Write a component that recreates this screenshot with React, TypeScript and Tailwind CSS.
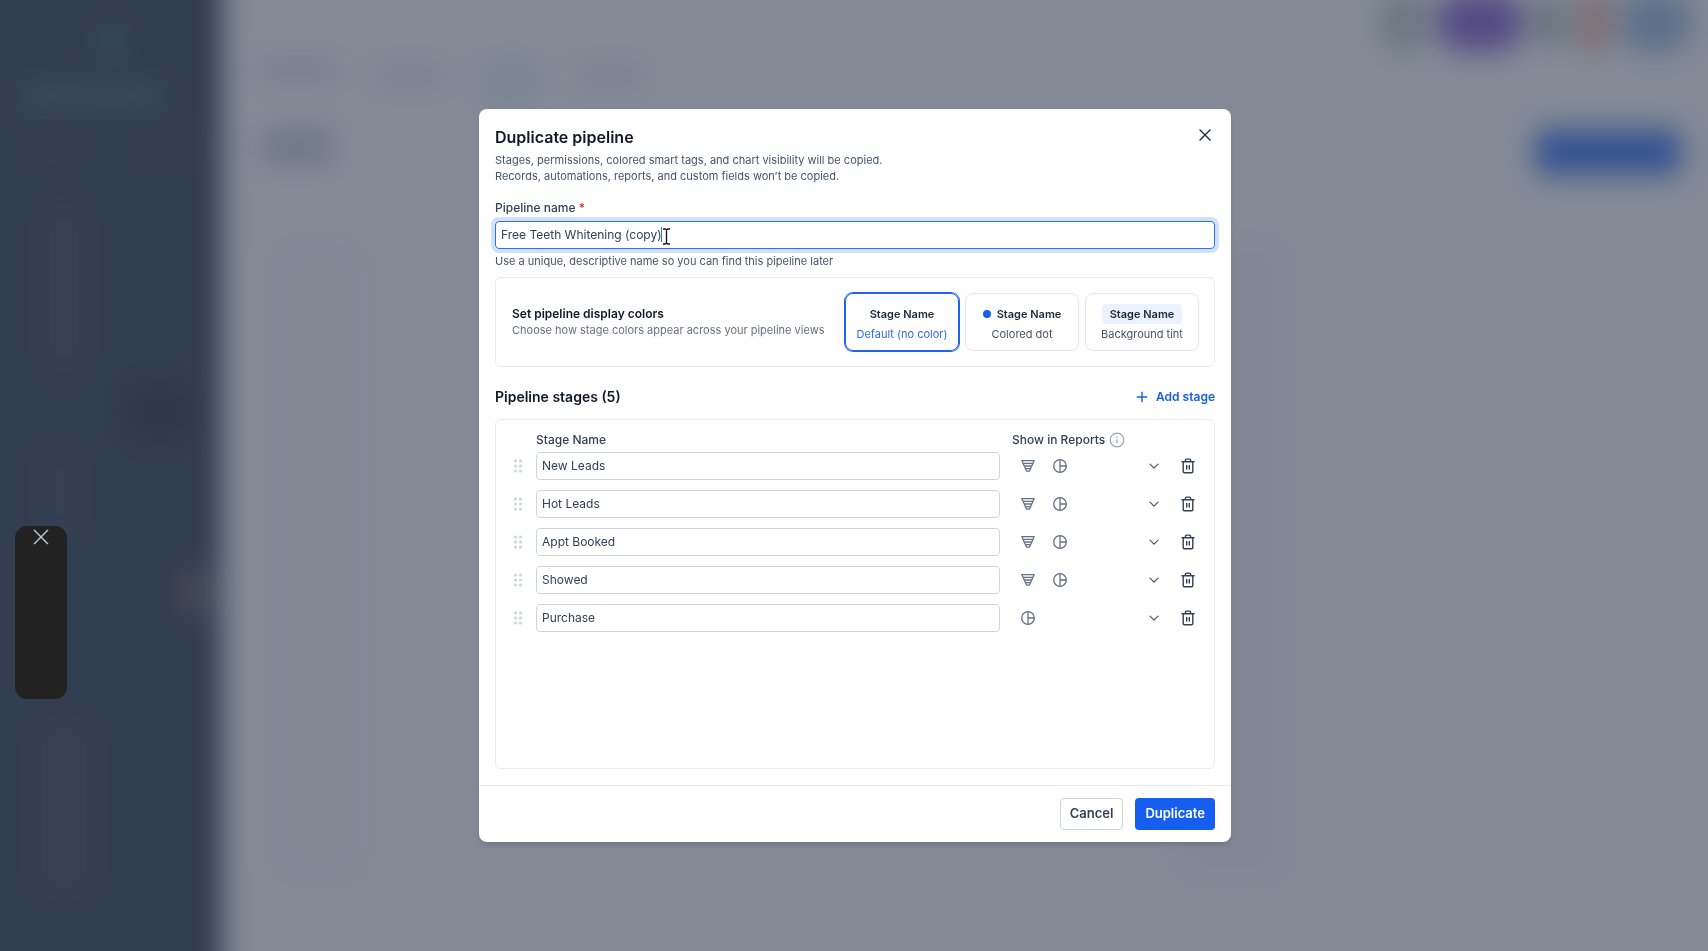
import React, { useState } from 'react';

const initialStages = [
  { id: 1, name: 'New Leads', funnel: true, pie: true },
  { id: 2, name: 'Hot Leads', funnel: true, pie: true },
  { id: 3, name: 'Appt Booked', funnel: true, pie: true },
  { id: 4, name: 'Showed', funnel: true, pie: true },
  { id: 5, name: 'Purchase', funnel: false, pie: true },
];

const CloseIcon = ({ className }: { className: string }) => (
  <svg viewBox="0 0 12 12" className={className} fill="none" stroke="currentColor" strokeLinecap="round">
    <path d="M1 1l10 10M11 1L1 11" />
  </svg>
);

const FunnelIcon = () => (
  <svg viewBox="0 0 16 16" className="size-4" fill="none" stroke="currentColor" strokeWidth="1.3" strokeLinejoin="round">
    <path d="M1.8 2.6h12.4L9.4 13.2H6.6z" />
    <path d="M3.2 5.4h9.6M4.5 8h7M5.8 10.6h4.4" />
  </svg>
);

const PieIcon = () => (
  <svg viewBox="0 0 16 16" className="size-4" fill="none" stroke="currentColor" strokeWidth="1.3">
    <circle cx="8" cy="8" r="6.3" />
    <path d="M8 1.7v12.6M8 8h6.3" />
  </svg>
);

const GripIcon = () => (
  <svg viewBox="0 0 12 14" className="h-3.5 w-3" fill="currentColor">
    <circle cx="3.5" cy="2" r="1.6" />
    <circle cx="8.5" cy="2" r="1.6" />
    <circle cx="3.5" cy="7" r="1.6" />
    <circle cx="8.5" cy="7" r="1.6" />
    <circle cx="3.5" cy="12" r="1.6" />
    <circle cx="8.5" cy="12" r="1.6" />
  </svg>
);

const TrashIcon = () => (
  <svg viewBox="0 0 16 16" className="size-4" fill="none" stroke="currentColor" strokeWidth="1.4" strokeLinecap="round" strokeLinejoin="round">
    <path d="M2 3.7h12M5.4 3.5V2.3c0-.7.5-1.2 1.2-1.2h2.8c.7 0 1.2.5 1.2 1.2v1.2" />
    <path d="M3.2 3.9v9c0 1.1.8 1.9 1.9 1.9h5.8c1.1 0 1.9-.8 1.9-1.9v-9" />
    <path d="M6.7 7.4v3.6M9.3 7.4v3.6" />
  </svg>
);

// The app page that sits behind the dialog, a bit larger than the window so its blurred edges stay outside
function Backdrop() {
  return (
    <div aria-hidden="true" className="h-screen overflow-hidden bg-white">
      <div className="-m-10 flex h-[calc(100vh+80px)] blur-[14px]">
        <div className="flex w-[262px] shrink-0 flex-col bg-[#102035] pt-16 pl-10">
          <div className="mx-auto h-9 w-7 rounded-full bg-[#2a5a4a]" />
          <div className="mx-5 mt-6 h-6 w-36 rounded-md bg-[#384e62]" />
          <div className="mx-8 mt-6 flex justify-between">
            <div className="h-7 w-11 rounded-md bg-[#202e44]" />
            <div className="h-7 w-11 rounded-md bg-[#202e44]" />
          </div>
          <div className="mt-10 ml-10 h-44 w-12 rounded-full bg-[#1d2b41]" />
          <div className="mt-3 ml-32 h-12 w-16 rounded-md bg-[#04101f]" />
          <div className="mt-2 ml-10 h-24 w-10 rounded-full bg-[#1d2b41]" />
          <div className="mt-7 ml-auto flex pr-2">
            <div className="h-12 w-5 bg-[#5a4238]" />
            <div className="h-12 w-4 bg-[#2a5248]" />
          </div>
          <div className="mt-24 ml-8 h-48 w-16 rounded-full bg-[#1d2b41]" />
        </div>
        <div className="flex grow flex-col bg-white pt-8 pr-10">
          <div className="flex h-15 items-center justify-end gap-2 pr-4">
            <div className="h-15 w-12 rounded-full bg-[#b8d0c4]" />
            <div className="h-15 w-22 rounded-full bg-[#7a4cd0]" />
            <div className="h-12 w-9 rounded-full bg-[#b0c4c0]" />
            <div className="h-15 w-9 rounded-full bg-[#f0b0a0]" />
            <div className="h-15 w-18 rounded-full bg-[#8fb2dd]" />
          </div>
          <div className="mt-1 flex h-10 items-center gap-9 pl-9">
            <div className="mb-3 h-5 w-20 rounded bg-[#dcdee2]" />
            <div className="h-7 w-18 rounded bg-[#ebecee]" />
            <div className="mt-3 h-10 w-14 rounded bg-[#e4f0f5]" />
            <div className="h-7 w-18 rounded bg-[#ebecee]" />
          </div>
          <div className="mt-8 flex items-center justify-between pr-7 pl-10">
            <div className="mb-3 h-9 w-18 rounded-md bg-[#c8ccd2]" />
            <div className="h-11 w-36 rounded-md bg-[#155eef]" />
          </div>
          <div className="mt-16 flex grow justify-between pb-28 pl-12">
            <div className="w-24 rounded-3xl bg-[#f8f9fa]" />
            <div className="mr-105 w-28 rounded-3xl bg-[#f6f7f9]" />
          </div>
        </div>
      </div>
    </div>
  );
}

function ColorOption({ value, selected, onSelect, label, children }: {
  value: string;
  selected: boolean;
  onSelect: (value: string) => void;
  label: string;
  children: React.ReactNode;
}) {
  return (
    <label
      className={`flex h-[58px] w-[114px] cursor-pointer flex-col items-center gap-0.5 rounded-lg border pt-2.5 ${
        selected ? 'border-[#2063f0] ring-1 ring-[#2063f0]' : 'border-[#e4e7ec]'
      }`}
    >
      <input
        type="radio"
        name="display-color"
        value={value}
        checked={selected}
        onChange={() => onSelect(value)}
        className="sr-only"
      />
      <span className="flex h-5 items-center text-[11px] font-semibold text-[#1d2939]">{children}</span>
      <span className={`text-[11px] leading-4 ${selected ? 'text-[#2f6bed]' : 'text-[#475467]'}`}>{label}</span>
    </label>
  );
}

function App() {
  const [name, setName] = useState('Free Teeth Whitening (copy)');
  const [display, setDisplay] = useState('default');
  const [stages, setStages] = useState(initialStages);

  const addStage = () => {
    setStages([...stages, { id: Date.now(), name: '', funnel: true, pie: true }]);
  };

  const renameStage = (id: number, value: string) => {
    setStages(stages.map((s) => (s.id === id ? { ...s, name: value } : s)));
  };

  const removeStage = (id: number) => {
    setStages(stages.filter((s) => s.id !== id));
  };

  return (
    <div className="font-[Inter,sans-serif] text-[#344054]">
      <Backdrop />

      <div className="fixed inset-0 flex items-center justify-center bg-[#434c5e]/66 pl-0.5">
        <div role="dialog" aria-labelledby="dialog-title" className="w-full max-w-[752px] rounded-lg bg-white shadow-md">
          <div className="px-4 pt-4 pb-4">
            <div className="flex items-start justify-between">
              <div>
                <h1 id="dialog-title" className="text-base leading-6 font-semibold text-[#101828]">Duplicate pipeline</h1>
                <p className="mt-[3px] text-[11px] leading-4 text-[#475467]">
                  Stages, permissions, colored smart tags, and chart visibility will be copied.
                  <br />
                  Records, automations, reports, and custom fields won’t be copied.
                </p>
              </div>
              <button aria-label="Close" className="flex size-5 items-center justify-center text-[#1d2939]">
                <CloseIcon className="size-3 stroke-[1.4]" />
              </button>
            </div>

            <label htmlFor="pipeline-name" className="mt-4 block text-xs leading-4 font-medium">
              Pipeline name <span className="text-[#d92d20]">*</span>
            </label>
            <div className="relative mt-[5px]">
              <input
                id="pipeline-name"
                value={name}
                onChange={(e) => setName(e.target.value)}
                className="block h-7 w-full rounded border border-[#2970ff] px-[5px] pb-px text-xs ring-4 ring-[#d1e0ff] outline-none"
              />
              {/* text caret and pointer */}
              <svg viewBox="0 0 12 20" className="pointer-events-none absolute top-1.5 left-[165px] h-5 w-3" fill="none">
                <path d="M1.5 0v15" stroke="#2970ff" />
                <path d="M3 2h2.2l1.3 1 1.3-1H10M6.5 3v13M3 17h2.2l1.3-1 1.3 1H10" stroke="#101010" strokeWidth="1.3" />
              </svg>
            </div>
            <p className="mt-1 text-[11px] leading-4 text-[#475467]">Use a unique, descriptive name so you can find this pipeline later</p>

            <div className="mt-2 flex items-center justify-between rounded-md border border-[#eaecf0] py-[15px] pr-[15px] pl-4">
              <div>
                <h2 className="text-xs leading-4 font-semibold text-[#101828]">Set pipeline display colors</h2>
                <p className="text-[11px] leading-4 text-[#667085]">Choose how stage colors appear across your pipeline views</p>
              </div>
              <div className="flex gap-1.5">
                <ColorOption value="default" selected={display === 'default'} onSelect={setDisplay} label="Default (no color)">
                  Stage Name
                </ColorOption>
                <ColorOption value="dot" selected={display === 'dot'} onSelect={setDisplay} label="Colored dot">
                  <span className="mr-1.5 size-2 rounded-full bg-[#155eef]" />
                  Stage Name
                </ColorOption>
                <ColorOption value="tint" selected={display === 'tint'} onSelect={setDisplay} label="Background tint">
                  <span className="rounded bg-[#ebf1fd] px-2 leading-5">Stage Name</span>
                </ColorOption>
              </div>
            </div>

            <div className="mt-5 flex h-5 items-center justify-between">
              <h2 className="text-sm font-semibold text-[#101828]">Pipeline stages (5)</h2>
              <button onClick={addStage} className="flex items-center gap-2 text-xs font-semibold text-[#155eef]">
                <svg viewBox="0 0 12 12" className="size-3" fill="none" stroke="currentColor" strokeWidth="1.4">
                  <path d="M6 .8v10.4M.8 6h10.4" />
                </svg>
                Add stage
              </button>
            </div>

            <div className="mt-3 min-h-[350px] rounded-md border border-[#eaecf0] px-4 pt-2.5">
              <table className="w-full table-fixed text-left text-xs">
                <thead>
                  <tr className="h-5">
                    <th className="w-6" />
                    <th className="p-0 font-medium">Stage Name</th>
                    <th className="w-[132px] p-0 font-medium">
                      <span className="flex items-center gap-1 whitespace-nowrap">
                        Show in Reports
                        <svg viewBox="0 0 16 16" className="size-4" fill="none" stroke="#98a2b3" strokeWidth="1.2">
                          <circle cx="8" cy="8" r="6.8" />
                          <path d="M8 7.2v4M8 4.6v1.3" />
                        </svg>
                      </span>
                    </th>
                    <th className="w-[54px]" />
                  </tr>
                </thead>
                <tbody>
                  {stages.map((stage) => (
                    <tr key={stage.id}>
                      <td className="p-0 pt-0.5 pb-2 text-[#d0d5dd]"><GripIcon /></td>
                      <td className="p-0 pt-0.5 pr-3 pb-2">
                        <input
                          aria-label="Stage Name"
                          value={stage.name}
                          onChange={(e) => renameStage(stage.id, e.target.value)}
                          className="block h-7 w-full rounded border border-[#d0d5dd] px-[5px] pb-px outline-none"
                        />
                      </td>
                      <td className="p-0 pt-0.5 pb-2">
                        <div className="flex gap-4 pl-2 text-[#667085]">
                          {stage.funnel && <button aria-label="Funnel chart"><FunnelIcon /></button>}
                          {stage.pie && <button aria-label="Pie chart"><PieIcon /></button>}
                        </div>
                      </td>
                      <td className="p-0 pt-0.5 pb-2">
                        <div className="flex justify-between">
                          <button aria-label="Expand" className="flex size-5 items-center justify-center text-[#475467]">
                            <svg viewBox="0 0 12 12" className="size-3" fill="none" stroke="currentColor" strokeWidth="1.2" strokeLinecap="round" strokeLinejoin="round">
                              <path d="M2 4.2l4 4 4-4" />
                            </svg>
                          </button>
                          <button aria-label="Delete stage" onClick={() => removeStage(stage.id)} className="flex size-5 items-center justify-center">
                            <TrashIcon />
                          </button>
                        </div>
                      </td>
                    </tr>
                  ))}
                </tbody>
              </table>
            </div>
          </div>

          <div className="flex justify-end gap-3 border-t border-[#eaecf0] px-4 py-3 text-[13px] font-semibold">
            <button className="h-8 rounded border border-[#d0d5dd] px-[9px]">Cancel</button>
            <button className="h-8 rounded bg-[#155eef] px-2.5 text-white">Duplicate</button>
          </div>
        </div>
      </div>

      <div className="fixed top-[526px] left-[15px] flex h-[173px] w-[52px] items-start justify-center rounded-xl bg-[#222223] pt-[3px]">
        <button aria-label="Dismiss" className="text-[#c8cad6]">
          <CloseIcon className="size-4" />
        </button>
      </div>
    </div>
  );
}

export default App;
